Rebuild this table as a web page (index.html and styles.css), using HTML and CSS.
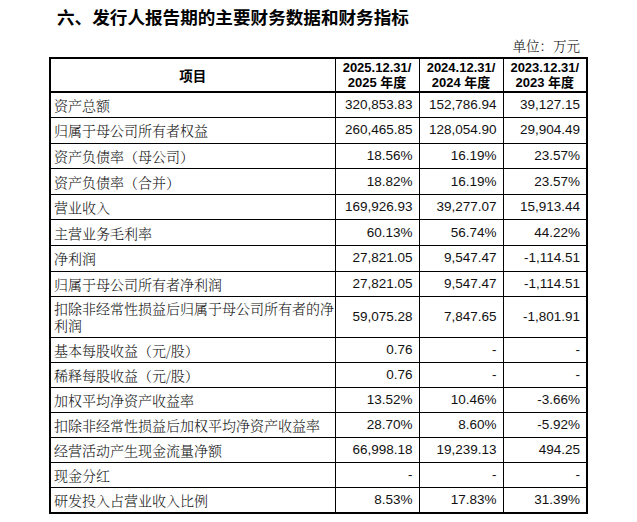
FILE: index.html
```html
<!DOCTYPE html>
<html lang="zh-CN">
<head>
<meta charset="utf-8">
<title>发行人报告期的主要财务数据和财务指标</title>
<link rel="stylesheet" href="styles.css">
</head>
<body>
<div class="page">
  <h1 class="title">六、发行人报告期的主要财务数据和财务指标</h1>
  <div class="unit">单位：万元</div>
  <table class="fin">
    <colgroup>
      <col class="c-item"><col class="c-num"><col class="c-num"><col class="c-num">
    </colgroup>
    <thead>
      <tr class="head">
        <th class="h-item">项目</th>
        <th>2025.12.31/<br>2025 年度</th>
        <th>2024.12.31/<br>2024 年度</th>
        <th>2023.12.31/<br>2023 年度</th>
      </tr>
    </thead>
    <tbody>
      <tr class="r-a"><td class="lbl">资产总额</td><td>320,853.83</td><td>152,786.94</td><td>39,127.15</td></tr>
      <tr class="r-a"><td class="lbl">归属于母公司所有者权益</td><td>260,465.85</td><td>128,054.90</td><td>29,904.49</td></tr>
      <tr class="r-a"><td class="lbl">资产负债率（母公司）</td><td>18.56%</td><td>16.19%</td><td>23.57%</td></tr>
      <tr class="r-a"><td class="lbl">资产负债率（合并）</td><td>18.82%</td><td>16.19%</td><td>23.57%</td></tr>
      <tr class="r-a"><td class="lbl">营业收入</td><td>169,926.93</td><td>39,277.07</td><td>15,913.44</td></tr>
      <tr class="r-a"><td class="lbl">主营业务毛利率</td><td>60.13%</td><td>56.74%</td><td>44.22%</td></tr>
      <tr class="r-a"><td class="lbl">净利润</td><td>27,821.05</td><td>9,547.47</td><td>-1,114.51</td></tr>
      <tr class="r-a"><td class="lbl">归属于母公司所有者净利润</td><td>27,821.05</td><td>9,547.47</td><td>-1,114.51</td></tr>
      <tr class="r-two"><td class="lbl two"><span class="ln">扣除非经常性损益后归属于母公司所有者的净</span><span class="ln">利润</span></td><td>59,075.28</td><td>7,847.65</td><td>-1,801.91</td></tr>
      <tr class="r-b"><td class="lbl">基本每股收益（元/股）</td><td>0.76</td><td>-</td><td>-</td></tr>
      <tr class="r-b"><td class="lbl">稀释每股收益（元/股）</td><td>0.76</td><td>-</td><td>-</td></tr>
      <tr class="r-b"><td class="lbl">加权平均净资产收益率</td><td>13.52%</td><td>10.46%</td><td>-3.66%</td></tr>
      <tr class="r-b"><td class="lbl">扣除非经常性损益后加权平均净资产收益率</td><td>28.70%</td><td>8.60%</td><td>-5.92%</td></tr>
      <tr class="r-b"><td class="lbl">经营活动产生现金流量净额</td><td>66,998.18</td><td>19,239.13</td><td>494.25</td></tr>
      <tr class="r-b"><td class="lbl">现金分红</td><td>-</td><td>-</td><td>-</td></tr>
      <tr class="r-b"><td class="lbl">研发投入占营业收入比例</td><td>8.53%</td><td>17.83%</td><td>31.39%</td></tr>
    </tbody>
  </table>
</div>
</body>
</html>
```

FILE: styles.css
```css
html, body {
  margin: 0;
  padding: 0;
  background: #ffffff;
}

.page {
  width: 637px;
  height: 522px;
  overflow: hidden;
  color: #111111;
  font-family: "Liberation Sans", Arial, sans-serif;
}

.title {
  margin: 0;
  padding: 6px 0 0 57px;
  height: 25px;
  font-family: "Noto Sans CJK SC", "Liberation Sans", sans-serif;
  font-weight: 700;
  font-size: 17.6px;
  line-height: 22px;
  color: #000000;
  white-space: nowrap;
}

.unit {
  width: 580px;
  height: 26px;
  display: flex;
  align-items: center;
  justify-content: flex-end;
  font-family: "Noto Serif CJK SC", "Noto Sans CJK SC", serif;
  font-weight: 300;
  font-size: 13.5px;
  line-height: 16px;
  padding-top: 2px;
  box-sizing: border-box;
}

.fin {
  margin-left: 49px;
  border-collapse: collapse;
  border: 2px solid #000000;
  table-layout: fixed;
  width: 539px;
}

.c-item { width: 285px; }
.c-num { width: 84px; }

.fin th,
.fin td {
  border: 1px solid #000000;
  padding: 0 6px 0 3px;
  white-space: nowrap;
  vertical-align: middle;
}

.fin th {
  font-family: "Liberation Sans", "Noto Sans CJK SC", sans-serif;
  font-weight: 700;
  font-size: 13px;
  line-height: 15px;
  text-align: center;
  padding: 1px 2px;
  color: #000000;
}

.fin .head {
  height: 33px;
}

.fin thead th {
  border-bottom: 2px solid #000000;
}

.fin .h-item {
  font-family: "Noto Sans CJK SC", sans-serif;
  font-size: 13.5px;
}

.fin td {
  font-size: 13.5px;
  line-height: 16px;
  text-align: right;
}

.fin td.lbl {
  text-align: left;
  font-family: "Noto Serif CJK SC", "Noto Sans CJK SC", serif;
  font-weight: 300;
  font-size: 14px;
}

.fin td.two .ln {
  display: block;
  line-height: 17px;
  height: 17px;
  overflow: visible;
}

.r-a { height: 25.6px; }
.r-two { height: 41px; }
.r-b { height: 25px; }
```
